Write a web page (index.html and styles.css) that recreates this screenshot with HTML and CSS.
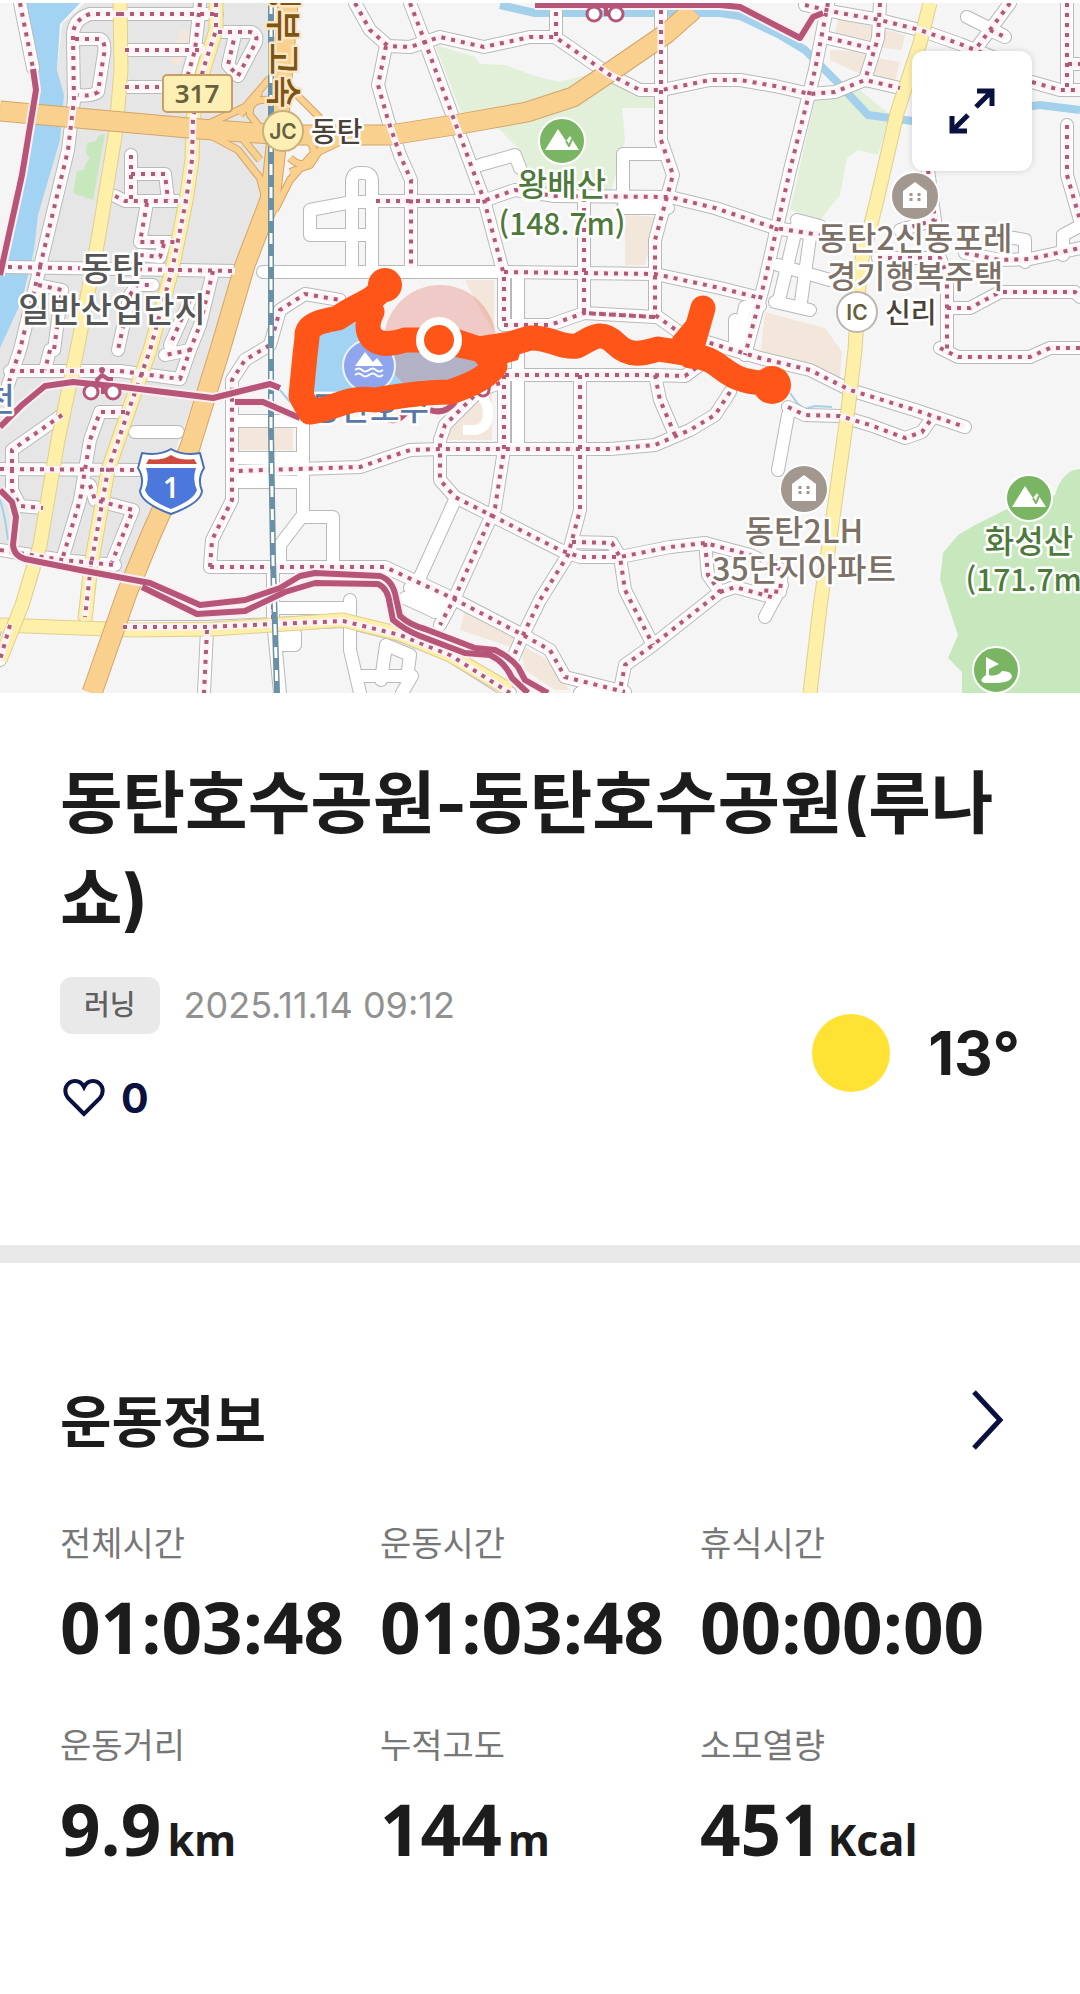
FILE: index.html
```html
<!DOCTYPE html>
<html lang="ko">
<head>
<meta charset="utf-8">
<meta name="viewport" content="width=device-width, initial-scale=1">
<title>동탄호수공원 러닝 기록</title>
<link rel="stylesheet" href="styles.css">
</head>
<body>
<main class="page">
  <section class="map" aria-label="운동 경로 지도">
    <svg class="map-canvas" viewBox="0 0 1080 693" role="img" aria-label="동탄호수공원 주변 지도">
      <defs>
        <g id="lanes">
          <path d="M310 210V235H371M310 210L352 202H371M352 268V182Q352 173 360 173H364Q372 173 372 182V268"/>
          <path d="M263 272H500M518 275V445M623 154H665M623 154V200M623 208H668"/>
          <path d="M480 165L515 155L520 168M303 375V515L280 545V560M235 421H300M235 458H300M235 482H300M303 517H333V568M135 432H178"/>
          <path d="M455 500L420 577M405 598L435 612L445 595M410 588L432 598M350 600V650L360 693M280 608H345M285 634H295V645H280"/>
          <path d="M386 645L381 680M386 645L410 655L407 678M360 676H412L402 693M274 630L280 693"/>
          <path d="M788 415L778 470M782 585L765 617M738 340L745 307L760 306M797 225L780 296M811 230L801 302M797 220L820 226M778 265L830 280M775 302L810 310M967 17L1003 35M735 320V350"/>
          <path d="M1003 236L1025 240L1025 262M1063 255V235L1080 226M580 693L600 690"/>
        </g>
        <g id="paths">
          <path d="M20 3L33 68M120 14H90Q72 20 73 38L74 100L68 150L50 225L38 275L20 350L8 385"/>
          <path d="M120 14H217M75 39H100Q107 42 103 60L98 92Q90 97 78 95M125 50H205M125 87H160M200 3L195 50L185 85"/>
          <path d="M218 32H250Q258 33 256 42L238 76L228 65L235 35M131 155V200M131 174H165L168 200M115 196L125 201H186M147 203L140 242H178M164 244L160 257L140 255"/>
          <path d="M8 267L235 271M38 285L62 290L54 350M213 271L200 325L188 355M130 295L137 285H153M130 295L118 350M190 300L170 345M50 350L45 370M10 371H120L180 379L190 350L165 355"/>
          <path d="M216 3V30L203 70L193 118L192 160L186 201L172 270L150 350L127 415L108 470L100 515L91 565L85 617"/>
          <path d="M125 412H100L90 440L80 500L62 560M62 415L12 450V490L20 506L43 508M0 469L140 470M90 485L95 500L133 510L112 562M0 550L62 560L115 565"/>
          <path d="M10 625L0 660M123 627H207L343 621L400 635L450 655L510 693M207 630L204 693M273 575V625"/>
          <path d="M355 3L370 30L388 46L410 47L440 37L484 47L530 37H555L610 75L640 90L662 90L710 80H740L775 86L810 94L835 92L865 80L900 88"/>
          <path d="M386 46L378 85L388 120L400 155L411 180V268M410 3L425 42L484 200L504 275V325"/>
          <path d="M504 375V450L495 508L455 597L440 625"/>
          <path d="M376 201H483L515 190L555 196L670 197L715 208L775 228L820 235M556 12V38M661 10V140L673 175L655 240V315L690 340"/>
          <path d="M584 198V313L655 317M504 272L655 274L720 288L760 298M504 325H550L584 313L655 317M828 3L815 70L790 170L765 280L745 355"/>
          <path d="M505 375H655L685 376L700 365M580 375V510L568 555L540 600L523 635L510 665M655 375L660 400L675 435M730 392L715 415L690 430L655 445L610 449H440L410 450L360 467L235 471"/>
          <path d="M500 383L480 390L445 425L440 440V480L455 497L560 550L580 557H620L670 547L705 543L750 555L782 570L780 592L760 590M572 542L612 543L620 557L625 590L653 645"/>
          <path d="M705 543L708 575L720 592L653 645L625 665L620 690M720 592L735 587L775 598"/>
          <path d="M210 567H385L450 597L523 635L550 650L565 677L625 692M210 567L212 540L232 500V380L245 360L270 345L280 310L305 294L340 300"/>
          <path d="M700 340L760 358L810 370L850 390L915 410L965 427M788 407L805 415L840 416L870 425L905 438L922 432L932 418"/>
          <path d="M805 5L840 13L880 20L920 30L960 44L1000 60M880 3L878 38L865 80M828 38L870 48M1010 3L990 30L975 50M990 30L1005 37M1032 82L1060 90L1080 90M1067 3V90M1068 64H1080"/>
          <path d="M1067 125V175L1080 220M928 170L935 220L900 230M878 258L940 258L947 275V350M965 253L1000 260L1030 259L1080 248M947 308H970L1000 292H1075L1080 297M940 348L958 357H1030L1050 348H1080"/>
        </g>
        <g id="yellow-roads">
          <path d="M120 3L121 70L116 130L98 240L78 345L58 440L40 545L22 605L0 660"/>
          <path d="M930 3L920 43L897 113L877 200L860 267L855 350L848 410L833 517L820 607L810 693"/>
        </g>
        <g id="yellow-lanes">
          <path d="M216 3V30L203 72L193 118L192 160L186 201L172 270L150 350L127 415L108 470L100 515L91 565L85 620"/>
          <path d="M0 625L133 630L213 629L343 620L400 634L450 655L510 690"/>
        </g>
        <g id="orange-roads">
          <path d="M0 111L100 120L200 129L285 135H390L460 124L527 112L573 97L613 70L667 33L693 10"/>
          <path d="M288 3L278 130L270 200L245 265L220 350L190 447L150 537L127 593L92 693"/>
        </g>
        <g id="ramps">
          <path d="M208 124L245 107L270 78M208 134L238 150L260 178L267 205M240 115L260 92M242 138L260 160M320 118L294 92M348 138L312 155L290 180L275 210M325 142L310 165L290 172M292 150Q285 135 300 137Q318 143 312 158Q302 170 290 158M270 100Q248 98 250 115L258 125"/>
        </g>
        <g id="bike-roads">
          <path d="M33 69L36 90L22 175L0 275"/>
          <path d="M535 5H720L740 7L800 38L813 17L823 13"/>
          <path d="M0 427L22 405L45 386L73 382L123 387L213 398L270 384L280 388M235 402H263L300 418"/>
          <path d="M0 490L12 502L16 517L13 545Q14 556 25 559L80 570L150 583L200 605L245 600L280 588L300 576L315 573L380 576Q393 580 396 598L400 616Q410 625 425 629L475 648L495 650Q510 657 518 667L525 680L548 693"/>
          <path d="M142 587L197 614L245 611L285 592L315 583L378 584Q388 588 390 605L393 620Q405 630 420 636L465 653L490 655Q505 662 512 678L528 693M380 414Q395 428 408 410M430 410Q445 415 455 402"/>
        </g>
        <g id="mountain"><circle r="23"/><path class="poi-glyph" d="M-17 9L-4 -12L4 0L8 -5L17 9Z"/><path class="poi-cut" d="M4 0L7 5L10 -2"/></g>
        <g id="house"><circle r="24"/><path class="poi-glyph" d="M-12 12V-5L0 -14L12 -5V12Z"/><path class="poi-dots" d="M-4 -3V5M4 -3V5"/></g>
        <g id="bicycle">
          <circle class="bike-wheel" cx="-11" cy="8" r="7"/><circle class="bike-wheel" cx="11" cy="8" r="7"/>
          <path class="bike-line" d="M-7 -3L1 2V10M-6 -3L0 -9L6 -5H11"/>
          <circle class="bike-head" cx="0" cy="-14" r="3"/>
        </g>
      </defs>

      <rect class="land" width="1080" height="693"/>
      <path class="industry" d="M62 24L85 3H270V190L130 575L0 545V345L45 190Z"/>
      <path class="water" d="M25 3H80L60 24L57 70L64 95L60 140L38 215L34 250L22 300L0 348V270L22 170L37 95L33 60Z"/>
      <path class="green" d="M105 134L98 136L96 141L87 143L86 154L90 158L86 163L84 170L77 171L73 193L93 200Z"/>
      <path class="meadow" d="M435 45L475 57L480 64L505 65L535 76L560 82L610 68L625 90L655 98V108H622L625 140L610 195H535L520 150L495 125L510 105L462 115Z"/>
      <path class="meadow" d="M815 100L860 90L890 115L878 155L858 150L847 158L840 195L820 220L790 210Z"/>
      <path class="green" d="M1080 469Q1062 470 1055 495L1005 510L975 525L958 535L943 553L940 580L953 620L958 635L948 658L962 672V693H1080Z"/>
      <path class="block" d="M180 30H197L180 65H170ZM838 18L878 28L870 40L835 33ZM885 30L905 35L902 50L882 48ZM830 50L870 52L862 75L830 60ZM878 58L900 62L895 82L870 78ZM625 215L657 217L645 265H625ZM465 280H494V332L475 300ZM765 312L825 328L842 352L840 377L760 358ZM237 427H293V450H237ZM450 405L492 380V440H448ZM509 380H516V440H508ZM465 610L520 635V650L460 630ZM520 645L545 658L570 690H555L525 670Z"/>
      <path class="stream" d="M500 5L535 13H720L740 16L780 35L805 50L840 85L868 115L920 122L1040 105L1080 110"/>
      <path class="creek" d="M0 500Q5 515 8 540M280 390L290 402M790 393L798 404L805 409L815 406L832 407"/>

      <use href="#lanes" class="lane-edge"/><use href="#paths" class="lane-edge"/>
      <use href="#lanes" class="lane"/><use href="#paths" class="lane"/>
      <path class="court" d="M480 392L487 405Q491 427 476 430H463"/>
      <use href="#yellow-lanes" class="yellow-edge"/><use href="#yellow-lanes" class="yellow"/>
      <use href="#yellow-roads" class="yellow-edge"/><use href="#yellow-roads" class="yellow"/>
      <use href="#ramps" class="ramp-edge"/><use href="#orange-roads" class="orange-edge"/>
      <use href="#ramps" class="ramp"/><use href="#orange-roads" class="orange"/>
      <use href="#paths" class="dots-halo"/><use href="#paths" class="dots"/>
      <path class="rail" d="M271 3V430L273 560L277 693"/><path class="rail-gap" d="M271 3V430L273 560L277 693"/>
      <use href="#bike-roads" class="bike-halo"/><use href="#bike-roads" class="bike"/>
      <circle class="junction" cx="483" cy="390" r="6"/>
      <use href="#bicycle" x="102" y="384"/>
      <use href="#bicycle" x="605" y="6"/>

      <path class="lake" d="M312 338L356 322L400 345L480 355L482 365L455 392L360 404L309 396Z"/>
      <circle class="radius" cx="440" cy="341" r="56"/>
      <circle class="lake-poi" cx="369" cy="366" r="26"/>
      <path class="poi-glyph" d="M355 366L365 352L373 362L377 358L383 366Z"/>
      <path class="waves" d="M355 370q4 -3 7 0t7 0t7 0t7 0M355 375q4 -3 7 0t7 0t7 0t7 0"/>
      <text class="place water-name" x="370" y="420">동탄호수</text>
      <path class="route" d="M385 285C372 304 360 302 338 318C316 322 306 326 307 338L305 355L301 396L310 412C335 409 348 396 375 400C410 394 430 392 450 392C475 384 488 376 495 366L482 350L452 340L405 340C370 352 362 330 372 312"/>
      <path class="route" d="M440 341L478 349L510 344L530 338C550 337 560 348 577 346C590 340 600 328 616 344C630 358 645 353 658 349L690 354L703 308M690 356C725 357 720 383 768 383L776 388"/>
      <path class="route-fill" d="M672 338L692 314L704 345L715 358L690 365ZM488 342L525 336L518 360L497 366Z"/>
      <circle class="route-end" cx="385" cy="285" r="17"/><circle class="route-end" cx="772" cy="385" r="19"/>
      <circle class="marker" cx="439" cy="340" r="19"/>

      <text class="highway-name" transform="translate(270 -24) rotate(90)" x="0" y="0">경부고속</text>
      <rect class="route-sign" x="163" y="75" width="69" height="37" rx="4"/>
      <text class="sign-number" x="197" y="103">317</text>
      <circle class="jc" cx="283" cy="131" r="20"/><text class="node-label" x="283" y="139">JC</text>
      <text class="place small start" x="311" y="142">동탄</text>
      <text class="place district" x="112" y="281">동탄</text><text class="place district" x="112" y="322">일반산업단지</text>
      <text class="place water-name" x="0" y="411">천</text>
      <use href="#mountain" x="562" y="141" class="poi-green"/>
      <text class="place mount" x="562" y="196">왕배산</text><text class="place mount peak" x="562" y="235">(148.7m)</text>
      <use href="#house" x="915" y="196" class="poi-brown"/>
      <text class="place estate" x="915" y="250">동탄2신동포레</text><text class="place estate" x="915" y="288">경기행복주택</text>
      <circle class="ic" cx="857" cy="312" r="20"/><text class="node-label" x="857" y="320">IC</text>
      <text class="place small start" x="885" y="323">신리</text>
      <use href="#house" x="804" y="489" class="poi-brown"/>
      <text class="place estate" x="804" y="543">동탄2LH</text><text class="place estate" x="804" y="581">35단지아파트</text>
      <use href="#mountain" x="1029" y="498" class="poi-green"/>
      <text class="place mount" x="1029" y="553">화성산</text><text class="place mount peak" x="1029" y="591">(171.7m)</text>
      <g class="poi-green" transform="translate(996 670)"><circle r="23"/><path class="poi-glyph" d="M-10 -13L3 -6L-7 -1V5Q1 7 6 1Q16 1 16 7Q15 12 2 13H-12Q-18 10 -10 5Z"/></g>
      <path class="shield" d="M142 453Q160 456 171 449Q182 456 200 453L204 468Q197 479 202 491Q201 503 171 514Q141 503 140 491Q145 479 138 468Z"/>
      <path class="shield-blue" d="M146 468H196Q192 479 197 490Q194 500 171 509Q148 500 145 490Q150 479 146 468Z"/>
      <path class="shield-red" d="M146 464L149 459Q162 461 171 455Q180 461 194 459L197 464Z"/>
      <text class="shield-number" x="171" y="498">1</text>
      <rect class="map-top" width="1080" height="3"/>
    </svg>
    <button class="expand" type="button" aria-label="지도 확대">
      <svg viewBox="0 0 46 46" aria-hidden="true"><path d="M27 19L43 3M28 3H43V18M19 27L3 43M3 28V43H18"/></svg>
    </button>
  </section>

  <section class="summary">
    <h1 class="title">동탄호수공원-동탄호수공원(루나쇼)</h1>
    <div class="meta">
      <div class="meta-main">
        <div class="activity"><span class="badge">러닝</span><time class="date" datetime="2025-11-14T09:12">2025.11.14 09:12</time></div>
        <button class="like" type="button" aria-label="좋아요 0">
          <svg viewBox="0 0 42 38" aria-hidden="true"><path d="M21 35L5 19Q1 14 3 8Q6 2 12 2Q18 2 21 8Q24 2 30 2Q36 2 39 8Q41 14 37 19Z"/></svg>
          <span>0</span>
        </button>
      </div>
      <div class="weather"><span class="sun" role="img" aria-label="맑음"></span><span class="temperature">13°</span></div>
    </div>
  </section>

  <section class="workout">
    <header class="workout-head">
      <h2>운동정보</h2>
      <a class="more" href="#details" aria-label="운동정보 자세히 보기"><svg viewBox="0 0 34 60" aria-hidden="true"><path d="M3 2L29 30L3 58"/></svg></a>
    </header>
    <dl class="stats" id="details">
      <div class="stat"><dt>전체시간</dt><dd>01:03:48</dd></div>
      <div class="stat"><dt>운동시간</dt><dd>01:03:48</dd></div>
      <div class="stat"><dt>휴식시간</dt><dd>00:00:00</dd></div>
      <div class="stat"><dt>운동거리</dt><dd>9.9<span class="unit">km</span></dd></div>
      <div class="stat"><dt>누적고도</dt><dd>144<span class="unit">m</span></dd></div>
      <div class="stat"><dt>소모열량</dt><dd>451<span class="unit">Kcal</span></dd></div>
    </dl>
  </section>
</main>
</body>
</html>
```
FILE: styles.css
```css
* { box-sizing: border-box; }
body { margin: 0; background: #fff; color: #1c1c1c; font-family: "Inter", "Noto Sans CJK KR", sans-serif; }
h1, h2, dl, dd { margin: 0; }
button { border: 0; padding: 0; background: none; font: inherit; color: inherit; cursor: pointer; }

/* Map */
.map { position: relative; }
.map-canvas { display: block; width: 100%; height: auto; }
.map-canvas use, .map-canvas path { stroke-linejoin: round; }
.land { fill: #f5f5f5; }
.map-top { fill: #fff; }
.industry { fill: #e6e6e6; }
.water, .lake { fill: #a3d3f3; }
.green { fill: #c7e7bd; }
.meadow { fill: #e3f0d9; }
.block { fill: #f3e7dc; }
.stream, .creek { fill: none; stroke: #a3d0eb; stroke-width: 8; }
.creek { stroke-width: 2; }
.lane-edge, .lane, .court, .dots, .dots-halo, .yellow, .yellow-edge, .orange, .orange-edge, .ramp, .ramp-edge, .bike, .bike-halo { fill: none; }
.lane-edge { stroke: #b9b9b9; stroke-width: 14; stroke-linecap: round; }
.lane { stroke: #fff; stroke-width: 12; stroke-linecap: round; }
.court { stroke: #fff; stroke-width: 10; }
.dots-halo { stroke: #fdf2f5; stroke-width: 7; }
.dots { stroke: #b05a78; stroke-width: 4; stroke-dasharray: 4 6; }
.yellow-edge { stroke: #dfcf90; stroke-width: 15; }
.yellow { stroke: #feefa9; stroke-width: 13; }
.orange-edge { stroke: #d3a568; stroke-width: 21; }
.orange { stroke: #fad08f; stroke-width: 19; }
.ramp-edge { stroke: #d3a568; stroke-width: 8; }
.ramp { stroke: #fad08f; stroke-width: 6; }
.rail { fill: none; stroke: #6a90a5; stroke-width: 6; }
.rail-gap { fill: none; stroke: #fff; stroke-width: 3; stroke-dasharray: 11 12; }
.bike-halo { stroke: #fdeff3; stroke-width: 10; }
.bike { stroke: #b65577; stroke-width: 6; }
.junction, .bike-wheel { fill: #fff; stroke: #b65577; stroke-width: 3; }
.bike-line { fill: none; stroke: #b65577; stroke-width: 4; }
.bike-head { fill: #b65577; }
.radius { fill: #e04b3a; fill-opacity: .25; }
.lake-poi { fill: #8fa6ee; stroke: #eef4ff; stroke-width: 2; }
.waves { fill: none; stroke: #fff; stroke-width: 2; }
.route { fill: none; stroke: #ff5518; stroke-width: 25; stroke-linecap: round; }
.route-end, .route-fill { fill: #ff5518; }
.marker { fill: #ff5518; stroke: #fff; stroke-width: 8; }
.poi-green, .poi-brown { stroke: #fff; stroke-width: 2; }
.poi-green { fill: #7ab563; }
.poi-brown { fill: #a39890; }
.poi-glyph { fill: #fff; stroke: none; }
.poi-cut { fill: none; stroke: #7ab563; stroke-width: 2; }
.poi-dots { fill: none; stroke: #a39890; stroke-width: 3; stroke-dasharray: 3 2; }
.place, .highway-name { font-family: "Noto Sans CJK KR", sans-serif; font-size: 32px; font-weight: 500; text-anchor: middle; paint-order: stroke; stroke: #fff; stroke-width: 5px; stroke-linejoin: round; }
.district { fill: #555; font-size: 34px; }
.mount { fill: #4d7a3b; }
.peak { font-size: 30px; }
.estate { fill: #7c7067; }
.small { fill: #4a4239; font-size: 28px; }
.start { text-anchor: start; }
.water-name { fill: #5878a8; }
.highway-name { fill: #7c5514; stroke: #fbe6c4; text-anchor: start; font-size: 36px; }
.route-sign { fill: #fef0b4; stroke: #c99e68; stroke-width: 2; }
.sign-number, .node-label, .shield-number { font-family: "Noto Sans", sans-serif; font-size: 26px; font-weight: 600; text-anchor: middle; fill: #68603f; }
.node-label { font-family: "Inter", sans-serif; font-size: 21px; }
.jc { fill: #fef0b4; stroke: #c9b07a; stroke-width: 2; }
.ic { fill: #fff; stroke: #bdb5b0; stroke-width: 2; }
.shield { fill: #fff; stroke: #4870b8; stroke-width: 2; }
.shield-blue { fill: #4c78dc; }
.shield-red { fill: #d04a40; }
.shield-number { fill: #fff; font-size: 28px; }
.expand { position: absolute; top: 51px; right: 48px; display: flex; align-items: center; justify-content: center; width: 120px; height: 120px; border-radius: 12px; background: #fff; box-shadow: 0 0 6px rgb(0 0 0 / 15%); }
.expand svg { width: 46px; height: 46px; fill: none; stroke: #0a1140; stroke-width: 5; }

/* Title, date and weather */
.summary { padding: 62px 60px 117px; border-bottom: 18px solid #e9e9e9; }
.title { font-size: 68px; line-height: 96px; font-weight: 700; }
.meta { display: flex; align-items: center; justify-content: space-between; margin-top: 30px; }
.meta-main { display: flex; flex-direction: column; align-items: flex-start; gap: 34px; }
.activity { display: flex; align-items: center; gap: 24px; }
.badge { padding: 0 24px; border-radius: 12px; background: #e9e9e9; color: #606060; font-size: 28px; line-height: 57px; font-weight: 500; }
.date { color: #919191; font-size: 36px; line-height: 57px; }
.like { display: flex; align-items: center; gap: 16px; padding-left: 3px; color: #0a1140; font-size: 41px; line-height: 60px; font-weight: 700; }
.like svg { width: 42px; height: 38px; fill: none; stroke: currentColor; stroke-width: 4; }
.weather { display: flex; align-items: center; gap: 38px; }
.sun { width: 78px; height: 78px; border-radius: 50%; background: #ffe234; }
.temperature { font-size: 60px; line-height: 72px; font-weight: 700; }

/* Workout figures */
.workout { padding: 123px 60px 119px; }
.workout-head { display: flex; align-items: center; justify-content: space-between; }
.workout-head h2 { font-size: 56px; line-height: 72px; font-weight: 700; }
.more { display: flex; padding: 0 15px 4px 0; }
.more svg { width: 34px; height: 60px; fill: none; stroke: #0a1140; stroke-width: 5; }
.stats { display: grid; grid-template-columns: repeat(3, 1fr); row-gap: 51px; margin-top: 62px; }
.stat { display: flex; flex-direction: column; gap: 15px; }
.stat dt { color: #777; font-size: 34px; line-height: 48px; }
.stat dd { font-family: "Open Sans", sans-serif; font-size: 71px; line-height: 88px; font-weight: 700; white-space: nowrap; }
.unit { margin-left: 6px; font-size: 43px; }
```
